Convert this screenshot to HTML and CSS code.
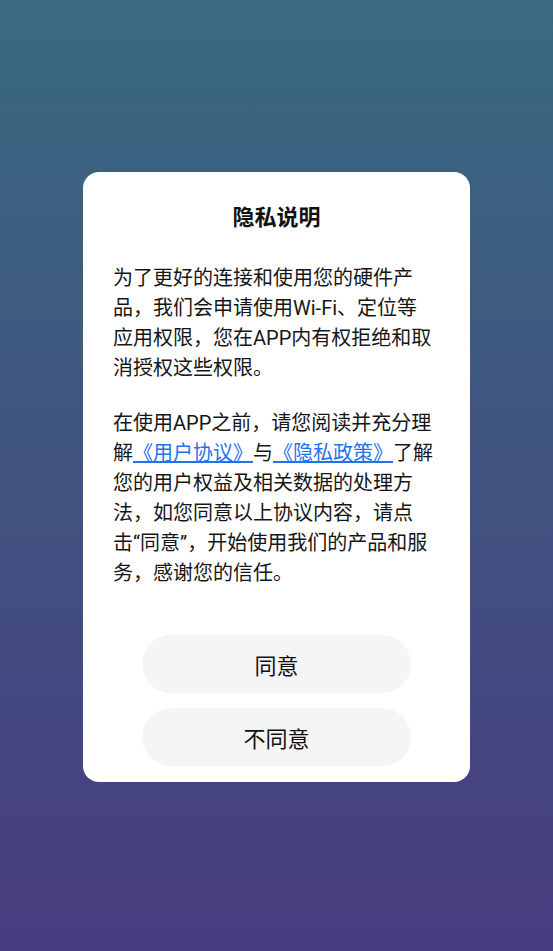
FILE: index.html
```html
<!DOCTYPE html>
<html lang="zh-CN">
<head>
  <meta charset="UTF-8" />
  <meta name="viewport" content="width=device-width, initial-scale=1" />
  <title>隐私说明</title>
  <link rel="stylesheet" href="styles.css">
</head>
<body>

<div class="overlay">
  <div class="dialog">
    <h2>隐私说明</h2>
    <p>为了更好的连接和使用您的硬件产品，我们会申请使用Wi-Fi、定位等应用权限，您在APP内有权拒绝和取消授权这些权限。</p>
    <p>在使用APP之前，请您阅读并充分理解<a href="#">《用户协议》</a>与<a href="#">《隐私政策》</a>了解您的用户权益及相关数据的处理方法，如您同意以上协议内容，请点击&#8288;“同意”，开始使用我们的产品和服务，感谢您的信任。</p>
    <div class="actions">
      <button>同意</button>
      <button>不同意</button>
    </div>
  </div>
</div>

</body>
</html>
```

FILE: styles.css
```css
:root {
  --bg-top: #396a80;
  --bg-bottom: #483c80;
  --surface: #fff;
  --text: #161616;
  --link: #1f72f0;
  --btn: #f5f5f5;
  --radius: 16px;
}

* { box-sizing: border-box; margin: 0; padding: 0; }

body {
  font-family: Roboto, "Noto Sans CJK SC", sans-serif;
  background: linear-gradient(to bottom, var(--bg-top), var(--bg-bottom));
  color: var(--text);
  min-height: 100vh;
}

.overlay {
  padding: 172px 83px 0;
}

.dialog {
  background: var(--surface);
  border-radius: var(--radius);
  padding: 30px 36px 16px 30px;
}

.dialog h2 {
  font-size: 22px;
  font-weight: 700;
  line-height: 32px;
  text-align: center;
  color: #111;
  margin: 0 -6px 29px 0;
}

.dialog p {
  font-size: 20px;
  line-height: 30px;
  margin-bottom: 25px;
}

.dialog p:last-of-type {
  margin-bottom: 47px;
}

.dialog a {
  color: var(--link);
  text-decoration: underline;
}

.actions {
  display: flex;
  flex-direction: column;
  align-items: center;
  gap: 15px;
  margin-right: -6px;
}

.actions button {
  width: 269px;
  height: 58px;
  border: none;
  border-radius: 29px;
  background: var(--btn);
  font-family: inherit;
  font-size: 22px;
  color: #111;
  cursor: pointer;
}
```
